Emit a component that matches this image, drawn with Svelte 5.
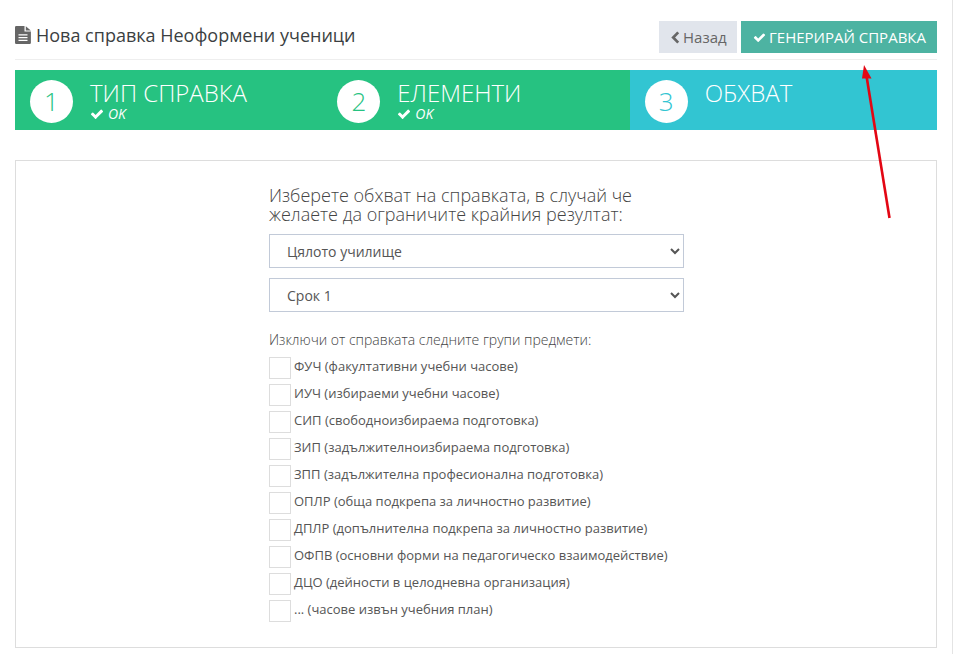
<script>
  const steps = [
    { num: 1, title: 'ТИП СПРАВКА', ok: true },
    { num: 2, title: 'ЕЛЕМЕНТИ', ok: true },
    { num: 3, title: 'ОБХВАТ', ok: false }
  ];
  const groups = [
    'ФУЧ (факултативни учебни часове)',
    'ИУЧ (избираеми учебни часове)',
    'СИП (свободноизбираема подготовка)',
    'ЗИП (задължителноизбираема подготовка)',
    'ЗПП (задължителна професионална подготовка)',
    'ОПЛР (обща подкрепа за личностно развитие)',
    'ДПЛР (допълнителна подкрепа за личностно развитие)',
    'ОФПВ (основни форми на педагогическо взаимодействие)',
    'ДЦО (дейности в целодневна организация)',
    '... (часове извън учебния план)'
  ];
  const check = 'M1671 566q0 40-28 68l-724 724-136 136q-28 28-68 28t-68-28l-136-136-362-362q-28-28-28-68t28-68l136-136q28-28 68-28t68 28l294 295 656-657q28-28 68-28t68 28l136 136q28 28 28 68z';
</script>

<div class="page">
  <header class="head">
    <h1 class="title">
      <svg class="file" viewBox="0 0 16 18" aria-hidden="true">
        <path d="M1.2 0H9.5V5.6H15.9V16.8A1.2 1.2 0 0 1 14.7 18H1.2A1.2 1.2 0 0 1 0 16.8V1.2A1.2 1.2 0 0 1 1.2 0ZM10.8 0.2 15.8 4.4H10.8ZM3.5 8.2V9.5H12.5V8.2ZM3.5 11V12.3H12.5V11ZM3.5 13.8V15.1H12.5V13.8Z" fill-rule="evenodd" />
      </svg>
      Нова справка Неоформени ученици
    </h1>
    <div class="actions">
      <button class="btn back">
        <svg class="chev" viewBox="0 0 9 13" aria-hidden="true"><path d="M7.2 1.4 2.2 6.5 7.2 11.6" /></svg>
        Назад
      </button>
      <button class="btn gen">
        <svg class="ico" viewBox="0 0 1792 1792" aria-hidden="true"><path d={check} /></svg>
        ГЕНЕРИРАЙ СПРАВКА
      </button>
    </div>
  </header>

  <div class="steps">
    {#each steps as s}
      <div class="step" class:current={!s.ok}>
        <div class="num">{s.num}</div>
        <div class="info">
          <div class="name">{s.title}</div>
          {#if s.ok}
            <div class="ok">
              <svg viewBox="0 0 1792 1792" aria-hidden="true"><path d={check} /></svg>
              <em>OK</em>
            </div>
          {/if}
        </div>
      </div>
    {/each}
  </div>

  <section class="panel">
    <form class="form">
      <p class="lead">Изберете обхват на справката, в случай че желаете да ограничите крайния резултат:</p>
      <select class="sel">
        <option>Цялото училище</option>
      </select>
      <select class="sel">
        <option>Срок 1</option>
      </select>
      <p class="sub">Изключи от справката следните групи предмети:</p>
      <ul class="groups">
        {#each groups as g}
          <li>
            <span class="box"></span>
            <span>{g}</span>
          </li>
        {/each}
      </ul>
    </form>
  </section>

  <svg class="arrow" width="953" height="654" viewBox="0 0 953 654" aria-hidden="true">
    <line x1="889.5" y1="218" x2="866.5" y2="76" stroke="#e30613" stroke-width="2.6" />
    <polygon points="864,65 871.5,78.5 862,78.5" fill="#e30613" />
  </svg>
</div>

<style>
  :global(body) {
    margin: 0;
    background: #fff;
  }
  .page {
    position: relative;
    box-sizing: border-box;
    width: 953px;
    height: 654px;
    padding: 0 15px 0 15px;
    overflow: hidden;
    border-right: 1px solid #e4e4e4;
    font-family: "Open Sans", sans-serif;
    color: #333;
  }
  .head {
    display: flex;
    justify-content: space-between;
    align-items: flex-start;
    height: 38px;
    padding-top: 21px;
    border-bottom: 1px solid #eee;
    margin-bottom: 10px;
  }
  .title {
    display: flex;
    align-items: center;
    gap: 5px;
    margin: 0;
    height: 28px;
    font-size: 18px;
    font-weight: 400;
    color: #3b3f42;
  }
  .file {
    width: 16px;
    height: 18px;
    fill: #666;
  }
  .actions {
    display: flex;
    gap: 4px;
  }
  .btn {
    display: flex;
    align-items: center;
    gap: 3px;
    height: 32px;
    padding: 0 11px 0 12px;
    border: 0;
    font-family: inherit;
    font-size: 15px;
  }
  .ico {
    width: 13px;
    height: 13px;
    fill: currentColor;
  }
  .chev {
    flex: none;
    width: 9px;
    height: 13px;
    fill: none;
    stroke: currentColor;
    stroke-width: 2.7;
  }
  .back {
    width: 78px;
    background: #e1e5ec;
    color: #666;
  }
  .gen {
    width: 196px;
    background: #4db3a2;
    color: #fff;
  }
  .steps {
    display: grid;
    grid-template-columns: repeat(3, 1fr);
    height: 60px;
    margin-bottom: 30px;
    background: #26c281;
    color: #fff;
  }
  .step {
    display: flex;
    gap: 17px;
    padding: 10px 0 0 15px;
  }
  .current {
    background: #32c5d2;
  }
  .num {
    flex: none;
    width: 43px;
    height: 43px;
    border-radius: 50%;
    background: #fff;
    color: #26c281;
    font-size: 26px;
    font-weight: 300;
    line-height: 43px;
    text-align: center;
  }
  .current .num {
    color: #32c5d2;
  }
  .name {
    font-size: 24px;
    font-weight: 300;
    line-height: 26px;
  }
  .ok {
    display: flex;
    align-items: center;
    gap: 4px;
    height: 14px;
    margin-top: 1px;
    font-size: 14px;
    line-height: 14px;
  }
  .ok svg {
    width: 14px;
    height: 14px;
    fill: #fff;
  }
  .panel {
    box-sizing: border-box;
    height: 488px;
    border: 1px solid #ddd;
  }
  .form {
    width: 415px;
    margin: 0 0 0 253px;
    padding-top: 25px;
  }
  .lead {
    max-width: 380px;
    margin: 0 0 10px;
    font-size: 18px;
    font-weight: 300;
    line-height: 19px;
    color: #444;
  }
  .sel {
    display: block;
    width: 100%;
    height: 34px;
    margin-bottom: 10px;
    padding: 0 13px;
    border: 1px solid #c2cad8;
    border-radius: 0;
    background-color: #fff;
    font-family: inherit;
    font-size: 14px;
    color: #555;
  }
  .sub {
    margin: 19px 0 8px;
    font-size: 14px;
    font-weight: 300;
    line-height: 18px;
    color: #444;
  }
  .groups {
    margin: 0;
    padding: 0;
    list-style: none;
  }
  .groups li {
    display: flex;
    align-items: flex-start;
    gap: 3px;
    height: 27px;
    font-size: 13px;
    line-height: 19px;
    color: #555;
  }
  .box {
    box-sizing: border-box;
    flex: none;
    width: 22px;
    height: 22px;
    border: 1px solid #ddd;
  }
  .arrow {
    position: absolute;
    left: 0;
    top: 0;
    pointer-events: none;
  }
</style>
